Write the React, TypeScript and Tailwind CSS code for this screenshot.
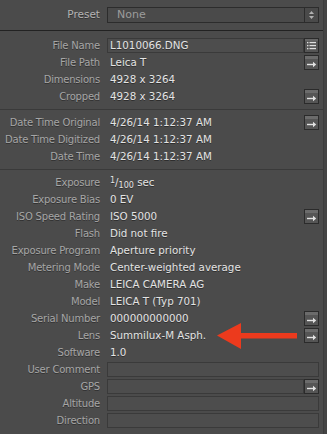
import React from "react";

type Btn = "arrow" | "list" | undefined;

interface Field {
  label: string;
  value?: React.ReactNode;
  box?: boolean;
  btn?: Btn;
}

const fileFields: Field[] = [
  { label: "File Name", value: "L1010066.DNG", box: true, btn: "list" },
  { label: "File Path", value: "Leica T", btn: "arrow" },
  { label: "Dimensions", value: "4928 x 3264" },
  { label: "Cropped", value: "4928 x 3264", btn: "arrow" },
];

const dateFields: Field[] = [
  { label: "Date Time Original", value: "4/26/14 1:12:37 AM", btn: "arrow" },
  { label: "Date Time Digitized", value: "4/26/14 1:12:37 AM" },
  { label: "Date Time", value: "4/26/14 1:12:37 AM" },
];

const exposure = (
  <span>
    <span className="relative -top-[3px] text-[8px]">1</span>
    <span>/</span>
    <span className="relative top-[2px] text-[8px]">100</span> sec
  </span>
);

const cameraFields: Field[] = [
  { label: "Exposure", value: exposure },
  { label: "Exposure Bias", value: "0 EV" },
  { label: "ISO Speed Rating", value: "ISO 5000", btn: "arrow" },
  { label: "Flash", value: "Did not fire" },
  { label: "Exposure Program", value: "Aperture priority" },
  { label: "Metering Mode", value: "Center-weighted average" },
  { label: "Make", value: "LEICA CAMERA AG" },
  { label: "Model", value: "LEICA T (Typ 701)" },
  { label: "Serial Number", value: "000000000000", btn: "arrow" },
  { label: "Lens", value: "Summilux-M Asph.", btn: "arrow" },
  { label: "Software", value: "1.0" },
  { label: "User Comment", box: true },
  { label: "GPS", box: true, btn: "arrow" },
  { label: "Altitude", box: true },
  { label: "Direction", box: true },
];

const ArrowButton = () => (
  <div className="w-[15px] h-[15px] border border-[#2b2b2b] bg-[#555555] shrink-0">
    <svg width="13" height="13" viewBox="0 0 13 13">
      <rect x="0" y="0" width="13" height="3" fill="#6b6b6b" />
      <path d="M2 8.5H9.5" stroke="#e2e2e2" strokeWidth="1.4" />
      <path d="M8 5.8L11.2 8.5L8 11.2Z" fill="#e2e2e2" />
    </svg>
  </div>
);

const ListButton = () => (
  <div className="w-[15px] h-[15px] border border-[#2b2b2b] bg-[#555555] shrink-0">
    <svg width="13" height="13" viewBox="0 0 13 13">
      <rect x="0" y="0" width="13" height="2" fill="#666666" />
      {[3.5, 6.5, 9.5].map((y) => (
        <g key={y}>
          <rect x="2" y={y - 0.6} width="1.4" height="1.4" fill="#e0e0e0" />
          <rect x="4.5" y={y - 0.6} width="6.5" height="1.3" fill="#e0e0e0" />
        </g>
      ))}
    </svg>
  </div>
);

const Row = ({ field, children }: { field: Field; children?: React.ReactNode }) => (
  <div className="relative flex h-[17px] items-center">
    <div className="w-[100px] shrink-0 text-right text-[10px] tracking-[-0.2px] text-[#a6a6a6] [text-shadow:0_1px_0_rgba(0,0,0,0.35)] whitespace-nowrap">
      {field.label}
    </div>
    <div className="ml-[7px] flex w-[212px] items-center">
      {field.box ? (
        <div className="flex-1 h-[15px] flex items-center border border-[#3a3a3a] bg-[#4d4d4d] pl-[2px] text-[10.3px] text-[#e4e4e4] [text-shadow:0_1px_0_rgba(0,0,0,0.4)] whitespace-nowrap">
          {field.value}
        </div>
      ) : (
        <div className="flex-1 pl-[3px] text-[10.3px] text-[#e4e4e4] [text-shadow:0_1px_0_rgba(0,0,0,0.4)] whitespace-nowrap">
          {field.value}
        </div>
      )}
      {field.btn === "arrow" && <ArrowButton />}
      {field.btn === "list" && <ListButton />}
    </div>
    {children}
  </div>
);

const Separator = () => (
  <div className="h-[9px] flex flex-col justify-center">
    <div className="h-px bg-[#3a3a3a]" />
  </div>
);

const RedArrow = () => (
  <svg
    className="absolute left-[216px] top-[-5px]"
    width="84"
    height="28"
    viewBox="0 0 84 28"
  >
    <path d="M1 13.5L25 1V11H81V16.5H25V27Z" fill="#ec3a1d" />
  </svg>
);

export default function App() {
  return (
    <div
      className="w-[327px] h-[434px] bg-[#4b4b4b] overflow-hidden flex"
      style={{ fontFamily: '"DejaVu Sans", "Liberation Sans", sans-serif' }}
    >
      <div className="w-[323px] flex flex-col">
        {/* Preset */}
        <div className="h-[30px] flex items-center">
          <div className="w-[100px] text-right text-[10.5px] text-[#b4b4b4] [text-shadow:0_1px_0_rgba(0,0,0,0.35)]">
            Preset
          </div>
          <div className="ml-[7px] w-[212px] h-[16px] flex items-center border border-[#2c2c2c] bg-[#4a4a4a]">
            <div className="flex-1 pl-[9px] text-[11px] text-[#9c9c9c]">None</div>
            <div className="w-[14px] h-full border-l border-[#2c2c2c] flex items-center justify-center">
              <svg width="7" height="10" viewBox="0 0 7 10">
                <path d="M3.5 1L6 4H1Z" fill="#b0b0b0" />
                <path d="M3.5 9L6 6H1Z" fill="#b0b0b0" />
              </svg>
            </div>
          </div>
        </div>
        <div className="h-px bg-[#222222]" />
        <div className="h-[6px]" />

        {fileFields.map((f) => (
          <Row key={f.label} field={f} />
        ))}
        <Separator />
        {dateFields.map((f) => (
          <Row key={f.label} field={f} />
        ))}
        <Separator />
        {cameraFields.map((f) => (
          <Row key={f.label} field={f}>
            {f.label === "Lens" && <RedArrow />}
          </Row>
        ))}
      </div>
      <div className="w-px bg-[#3c3c3c]" />
      <div className="flex-1 bg-[#444444]" />
    </div>
  );
}
